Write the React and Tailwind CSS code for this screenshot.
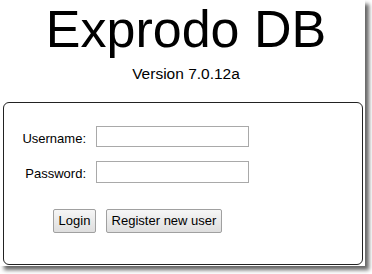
import React from "react";

export default function App() {
  return (
    <div className="w-[372px] h-[274px] bg-white overflow-hidden font-['Liberation_Sans',Arial,sans-serif] text-black">
      <div className="w-[365px] h-[266px] bg-white flex flex-col shadow-[4px_4px_4px_rgba(0,0,0,0.6)]">
        <div className="pl-[7px] text-center">
          <div className="mt-[3px] text-[52px] leading-none h-[52px]">Exprodo DB</div>
          <div className="mt-[11px] text-[15.5px] leading-none">Version 7.0.12a</div>
        </div>
        <div className="ml-[3px] mt-[20px] w-[360px] h-[163px] border border-[#222] rounded-[6px] flex flex-col pt-[23px]">
          <div className="grid grid-cols-[82px_153px] gap-x-[10px] gap-y-[13px] text-[13px]">
            <div className="flex items-center justify-end pt-[3px]">Username:</div>
            <input className="h-[21px] border border-[#a9a9a9] bg-white outline-none" />
            <div className="flex items-center justify-end pt-[3px]">Password:</div>
            <input type="password" className="h-[22px] border border-[#a9a9a9] bg-white outline-none" />
          </div>
          <div className="flex gap-[10px] ml-[49px] mt-[25px] text-[13px]">
            <button className="h-[24px] w-[43px] border border-[#a0a0a0] rounded-[2px] bg-gradient-to-b from-[#f6f6f6] to-[#dedede] leading-none">Login</button>
            <button className="h-[24px] w-[116px] border border-[#a0a0a0] rounded-[2px] bg-gradient-to-b from-[#f6f6f6] to-[#dedede] leading-none">Register new user</button>
          </div>
        </div>
      </div>
    </div>
  );
}
